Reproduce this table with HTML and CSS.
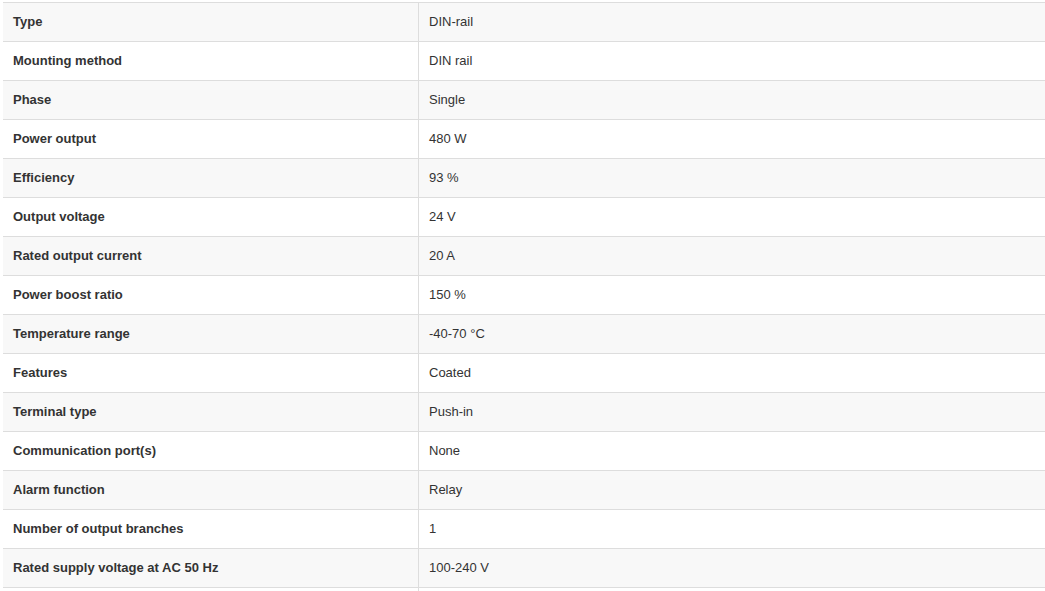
FILE: index.html
```html
<!DOCTYPE html>
<html>
<head>
<meta charset="utf-8">
<link rel="stylesheet" href="styles.css">
</head>
<body>
<table class="specs">
<tbody>
<tr><th>Type</th><td>DIN-rail</td></tr>
<tr><th>Mounting method</th><td>DIN rail</td></tr>
<tr><th>Phase</th><td>Single</td></tr>
<tr><th>Power output</th><td>480 W</td></tr>
<tr><th>Efficiency</th><td>93 %</td></tr>
<tr><th>Output voltage</th><td>24 V</td></tr>
<tr><th>Rated output current</th><td>20 A</td></tr>
<tr><th>Power boost ratio</th><td>150 %</td></tr>
<tr><th>Temperature range</th><td>-40-70 °C</td></tr>
<tr><th>Features</th><td>Coated</td></tr>
<tr><th>Terminal type</th><td>Push-in</td></tr>
<tr><th>Communication port(s)</th><td>None</td></tr>
<tr><th>Alarm function</th><td>Relay</td></tr>
<tr><th>Number of output branches</th><td>1</td></tr>
<tr><th>Rated supply voltage at AC 50 Hz</th><td>100-240 V</td></tr>
<tr><th></th><td></td></tr>
</tbody>
</table>
</body>
</html>
```

FILE: styles.css
```css
html, body {
  margin: 0;
  padding: 0;
  background: #fff;
}
body {
  padding: 2px 0 0 3px;
  font-family: "Liberation Sans", Arial, sans-serif;
  font-size: 13px;
  color: #333;
}
.specs {
  border-collapse: collapse;
  width: 1042px;
  table-layout: fixed;
}
.specs th,
.specs td {
  height: 18px;
  line-height: 18px;
  padding: 10px 10px;
  border-top: 1px solid #ddd;
  border-bottom: 1px solid #ddd;
  text-align: left;
  vertical-align: middle;
}
.specs th {
  width: 395px;
  font-weight: bold;
}
.specs td {
  border-left: 1px solid #ddd;
}
.specs tr:nth-child(odd) {
  background: #f8f8f8;
}
```
